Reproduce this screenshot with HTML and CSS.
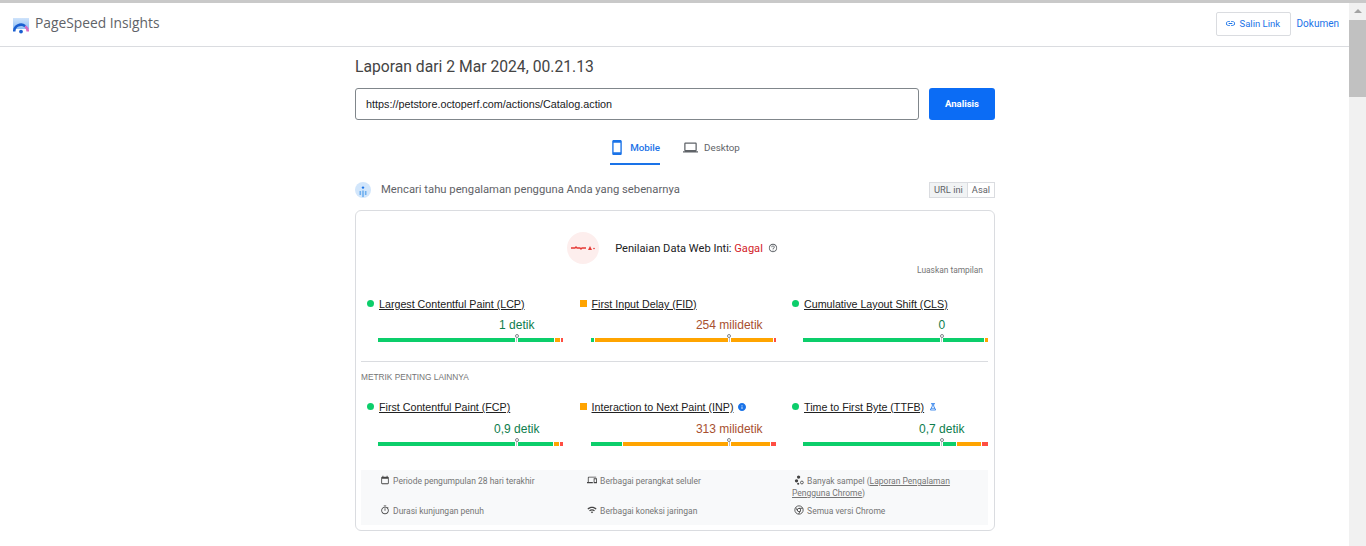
FILE: index.html
```html
<!DOCTYPE html>
<html lang="id">
<head>
    <meta charset="UTF-8">
    <meta name="viewport" content="width=device-width, initial-scale=1.0">
    <title>PageSpeed Insights</title>
    <link rel="stylesheet" href="styles.css">
</head>
<body>
    <div class="top-strip"></div>
    <div class="shell">
        <main class="page">
            <header class="topbar">
                <div class="brand">
                    <svg class="brand-logo" viewBox="0 0 16 16">
                        <defs>
                            <linearGradient id="sky" x1="0" y1="0" x2="0" y2="1">
                                <stop offset="0" stop-color="#cfe3fb"/>
                                <stop offset="1" stop-color="#8fc0f5"/>
                            </linearGradient>
                        </defs>
                        <path d="M0 0h16v11H0z" fill="url(#sky)"/>
                        <path d="M1.2 13.5a6.8 6.8 0 0 1 11-5.3" fill="none" stroke="#1a5fd0" stroke-width="2.6"/>
                        <path d="M12.2 8.2a6.8 6.8 0 0 1 2.6 5.3" fill="none" stroke="#d66bc4" stroke-width="2.6"/>
                        <circle cx="8" cy="13.6" r="1.9" fill="#1a5fd0"/>
                    </svg>
                    <span class="brand-name">PageSpeed Insights</span>
                </div>
                <div class="topbar-actions">
                    <a class="copy-link">
                        <svg class="icon-link" viewBox="0 0 24 24"><path d="M3.9 12c0-1.71 1.39-3.1 3.1-3.1h4V7H7c-2.76 0-5 2.24-5 5s2.24 5 5 5h4v-1.9H7c-1.71 0-3.1-1.39-3.1-3.1zM8 13h8v-2H8v2zm9-6h-4v1.9h4c1.71 0 3.1 1.39 3.1 3.1s-1.39 3.1-3.1 3.1h-4V17h4c2.76 0 5-2.24 5-5s-2.24-5-5-5z"/></svg>
                        Salin Link
                    </a>
                    <a class="docs-link">Dokumen</a>
                </div>
            </header>

            <div class="content">
                <h1>Laporan dari 2 Mar 2024, 00.21.13</h1>

                <form class="url-form">
                    <input class="url-input" type="text" value="https://petstore.octoperf.com/actions/Catalog.action">
                    <button class="analyze" type="button">Analisis</button>
                </form>

                <div class="tabs">
                    <div class="tab active">
                        <svg class="tab-icon" viewBox="5 1 14 22"><path d="M17 1.01L7 1c-1.1 0-2 .9-2 2v18c0 1.1.9 2 2 2h10c1.1 0 2-.9 2-2V3c0-1.1-.9-1.99-2-1.99zM17 19H7V5h10v14z"/></svg>
                        Mobile
                    </div>
                    <div class="tab">
                        <svg class="tab-icon wide" viewBox="0 4 24 16"><path d="M20 18c1.1 0 2-.9 2-2V6c0-1.1-.9-2-2-2H4c-1.1 0-2 .9-2 2v10c0 1.1.9 2 2 2H0v2h24v-2h-4zM4 6h16v10H4V6z"/></svg>
                        Desktop
                    </div>
                </div>

                <div class="crux-row">
                    <svg class="crux-icon" viewBox="0 0 16 16">
                        <circle cx="8" cy="8" r="8" fill="#d2e6fb"/>
                        <circle cx="8" cy="5.6" r="1.2" fill="#1a73e8"/>
                        <path d="M4.5 9h1.6v4H4.5zM7.2 8.4h1.6V15H7.2zM9.9 9h1.6v4H9.9z" fill="#6fb0ef"/>
                    </svg>
                    <span class="crux-text">Mencari tahu pengalaman pengguna Anda yang sebenarnya</span>
                    <div class="toggle">
                        <span class="toggle-item selected">URL ini</span>
                        <span class="toggle-item">Asal</span>
                    </div>
                </div>

                <section class="card">
                    <div class="verdict">
                        <span class="verdict-badge">
                            <svg viewBox="0 0 24 6" width="24" height="6">
                                <path d="M0 3h4l1-1 1 1h3l1 1 1-1h4" fill="none" stroke="#e53935" stroke-width="1.3"/>
                                <path d="M17 5l2-4 2 4z" fill="#e53935"/>
                                <circle cx="23" cy="3.5" r=".8" fill="#e53935"/>
                            </svg>
                        </span>
                        <span class="verdict-text">Penilaian Data Web Inti: <span class="fail">Gagal</span></span>
                        <svg class="help" viewBox="0 0 24 24"><path d="M11 18h2v-2h-2v2zm1-16C6.48 2 2 6.48 2 12s4.48 10 10 10 10-4.48 10-10S17.52 2 12 2zm0 18c-4.41 0-8-3.59-8-8s3.59-8 8-8 8 3.59 8 8-3.59 8-8 8zm0-14c-2.21 0-4 1.79-4 4h2c0-1.1.9-2 2-2s2 .9 2 2c0 2-3 1.75-3 5h2c0-2.25 3-2.5 3-5 0-2.21-1.79-4-4-4z"/></svg>
                    </div>
                    <div class="expand">Luaskan tampilan</div>

                    <div class="metrics first">
                        <div class="metric">
                            <div class="metric-title"><span class="dot"></span><a>Largest Contentful Paint (LCP)</a></div>
                            <div class="metric-value good"><span>1 detik</span></div>
                            <div class="bar">
                                <i class="seg green" style="flex-grow:176"></i><i class="seg orange" style="flex-grow:5"></i><i class="seg red" style="flex-grow:2"></i>
                                <span class="marker"></span>
                            </div>
                        </div>
                        <div class="metric">
                            <div class="metric-title"><span class="square"></span><a>First Input Delay (FID)</a></div>
                            <div class="metric-value average"><span>254 milidetik</span></div>
                            <div class="bar">
                                <i class="seg green" style="flex-grow:3"></i><i class="seg orange" style="flex-grow:177"></i><i class="seg red" style="flex-grow:1"></i>
                                <span class="marker"></span>
                            </div>
                        </div>
                        <div class="metric">
                            <div class="metric-title"><span class="dot"></span><a>Cumulative Layout Shift (CLS)</a></div>
                            <div class="metric-value good"><span>0</span></div>
                            <div class="bar">
                                <i class="seg green" style="flex-grow:181"></i><i class="seg orange" style="flex-grow:3"></i>
                                <span class="marker"></span>
                            </div>
                        </div>
                    </div>

                    <div class="divider"></div>
                    <div class="section-label">METRIK PENTING LAINNYA</div>

                    <div class="metrics second">
                        <div class="metric">
                            <div class="metric-title"><span class="dot"></span><a>First Contentful Paint (FCP)</a></div>
                            <div class="metric-value good"><span>0,9 detik</span></div>
                            <div class="bar">
                                <i class="seg green" style="flex-grow:174"></i><i class="seg orange" style="flex-grow:5"></i><i class="seg red" style="flex-grow:3"></i>
                                <span class="marker"></span>
                            </div>
                        </div>
                        <div class="metric">
                            <div class="metric-title">
                                <span class="square"></span><a>Interaction to Next Paint (INP)</a>
                                <svg class="title-icon" viewBox="2 2 20 20"><path fill="#1a73e8" d="M12 2C6.48 2 2 6.48 2 12s4.48 10 10 10 10-4.48 10-10S17.52 2 12 2zm1 15h-2v-6h2v6zm0-8h-2V7h2v2z"/></svg>
                            </div>
                            <div class="metric-value average"><span>313 milidetik</span></div>
                            <div class="bar">
                                <i class="seg green" style="flex-grow:31"></i><i class="seg orange" style="flex-grow:147"></i><i class="seg red" style="flex-grow:4"></i>
                                <span class="marker"></span>
                            </div>
                        </div>
                        <div class="metric">
                            <div class="metric-title">
                                <span class="dot"></span><a>Time to First Byte (TTFB)</a>
                                <svg class="title-icon" viewBox="0 0 12 12"><path d="M3 1h6M5 1v3.5L2 10.5h8L7 4.5V1" fill="none" stroke="#1a73e8" stroke-width="1.2"/><path d="M3 8h6" stroke="#1a73e8" stroke-width="1"/></svg>
                            </div>
                            <div class="metric-value good"><span>0,7 detik</span></div>
                            <div class="bar">
                                <i class="seg green" style="flex-grow:153"></i><i class="seg orange" style="flex-grow:24"></i><i class="seg red" style="flex-grow:6"></i>
                                <span class="marker"></span>
                            </div>
                        </div>
                    </div>

                    <div class="notes">
                        <div class="note">
                            <svg viewBox="0 0 24 24"><path d="M19 4h-1V2h-2v2H8V2H6v2H5c-1.1 0-2 .9-2 2v14c0 1.1.9 2 2 2h14c1.1 0 2-.9 2-2V6c0-1.1-.9-2-2-2zm0 16H5V9h14v11z"/></svg>
                            Periode pengumpulan 28 hari terakhir
                        </div>
                        <div class="note">
                            <svg viewBox="0 0 24 24"><path d="M4 6h18V4H4c-1.1 0-2 .9-2 2v11H0v3h14v-3H4V6zm19 2h-6c-.55 0-1 .45-1 1v10c0 .55.45 1 1 1h6c.55 0 1-.45 1-1V9c0-.55-.45-1-1-1zm-1 9h-4v-7h4v7z"/></svg>
                            Berbagai perangkat seluler
                        </div>
                        <div class="note">
                            <svg viewBox="0 0 24 24"><circle cx="11" cy="5" r="4"/><circle cx="6" cy="14" r="4"/><circle cx="10" cy="21" r="2.6"/><circle cx="19" cy="18" r="3.4" fill="none" stroke="#444" stroke-width="2"/></svg>
                            Banyak sampel (<a>Laporan Pengalaman</a> <a>Pengguna Chrome</a>)
                        </div>
                        <div class="note">
                            <svg viewBox="0 0 24 24"><path d="M15 1H9v2h6V1zm-4 13h2V8h-2v6zm8.03-6.61l1.42-1.42c-.43-.51-.9-.99-1.41-1.41l-1.42 1.42C16.07 4.74 14.12 4 12 4c-4.97 0-9 4.03-9 9s4.02 9 9 9 9-4.03 9-9c0-2.12-.74-4.07-1.97-5.61zM12 20c-3.87 0-7-3.13-7-7s3.13-7 7-7 7 3.13 7 7-3.13 7-7 7z"/></svg>
                            Durasi kunjungan penuh
                        </div>
                        <div class="note">
                            <svg viewBox="0 0 24 24"><path d="M1 9l2 2c4.97-4.97 13.03-4.97 18 0l2-2C16.93 2.93 7.08 2.93 1 9zm8 8l3 3 3-3c-1.65-1.66-4.34-1.66-6 0zm-4-4l2 2c2.76-2.76 7.24-2.76 10 0l2-2C15.14 9.14 8.87 9.14 5 13z"/></svg>
                            Berbagai koneksi jaringan
                        </div>
                        <div class="note">
                            <svg viewBox="0 0 24 24"><circle cx="12" cy="12" r="10" fill="none" stroke="#444" stroke-width="2"/><circle cx="12" cy="12" r="4" fill="none" stroke="#444" stroke-width="2"/><path d="M12 8h9M8.5 14L4 6.5M15.5 14L11 21.5" fill="none" stroke="#444" stroke-width="2"/></svg>
                            Semua versi Chrome
                        </div>
                    </div>
                </section>
            </div>
        </main>

        <div class="scrollbar">
            <span class="scroll-arrow"></span>
            <span class="scroll-thumb"></span>
        </div>
    </div>
</body>
</html>
```

FILE: styles.css
```css
html, body {
    margin: 0;
    height: 100%;
    overflow: hidden;
}
body {
    font-family: 'Roboto', 'Liberation Sans', sans-serif;
    background-color: #fff;
    color: #202124;
}
a {
    color: inherit;
}
svg {
    display: block;
}
.top-strip {
    height: 3px;
    background-color: #c9c9c9;
}
.shell {
    display: flex;
    height: 543px;
}
.page {
    flex: 1;
    min-width: 0;
}
.topbar {
    display: flex;
    justify-content: space-between;
    align-items: center;
    box-sizing: border-box;
    height: 44px;
    padding: 0 10px 0 13px;
    border-bottom: 1px solid #dadce0;
}
.brand {
    display: flex;
    align-items: center;
    gap: 6px;
    margin-top: -5px;
}
.brand-logo {
    width: 16px;
    height: 16px;
    margin-top: 7px;
}
.brand-name {
    font-family: 'Open Sans', sans-serif;
    font-size: 13.8px;
    color: #5f6368;
}
.topbar-actions {
    display: flex;
    align-items: center;
    gap: 6px;
    margin-top: -2px;
    font-size: 9.5px;
    color: #1a73e8;
}
.docs-link {
    font-size: 10px;
}
.copy-link {
    display: flex;
    align-items: center;
    gap: 4px;
    box-sizing: border-box;
    height: 24px;
    width: 75px;
    padding-left: 8px;
    border: 1px solid #dadce0;
    border-radius: 2px;
}
.icon-link {
    width: 11px;
    height: 11px;
    fill: #1a73e8;
}
.content {
    width: 640px;
    margin-left: 355px;
}
h1 {
    margin: 10px 0 0;
    font-size: 15.7px;
    font-weight: 400;
    line-height: 20px;
    color: #444;
}
.url-form {
    display: flex;
    gap: 10px;
    margin-top: 11px;
}
.url-input {
    flex: 1;
    box-sizing: border-box;
    height: 32px;
    padding: 0 10px;
    border: 1px solid #80868b;
    border-radius: 3px;
    font-family: 'Liberation Sans', sans-serif;
    font-size: 10.8px;
    color: #202124;
}
.analyze {
    width: 66px;
    height: 32px;
    padding: 0 0 2px;
    border: none;
    border-radius: 3px;
    background-color: #0b6cf5;
    color: white;
    font-family: 'Roboto', sans-serif;
    font-size: 9.5px;
    font-weight: 700;
}
.tabs {
    display: flex;
    justify-content: center;
    gap: 21px;
    margin-top: 14px;
    font-size: 9.8px;
    color: #5f6368;
}
.tab {
    display: flex;
    align-items: center;
    gap: 8px;
    box-sizing: border-box;
    height: 31px;
    padding: 0 0 3px 2px;
    border-bottom: 2px solid transparent;
}
.tab.active {
    color: #1a73e8;
    font-weight: 500;
    border-bottom-color: #1a73e8;
}
.tab-icon {
    width: 10px;
    height: 15px;
    fill: #1a73e8;
}
.tab-icon.wide {
    width: 15px;
    height: 11px;
    margin-right: -2px;
    fill: #5f6368;
}
.crux-row {
    display: flex;
    align-items: center;
    height: 16px;
    margin-top: 17px;
}
.crux-icon {
    width: 16px;
    height: 16px;
}
.crux-text {
    flex: 1;
    margin: -1px 0 0 10px;
    font-size: 11.26px;
    color: #5f6368;
}
.toggle {
    display: flex;
    border: 1px solid #dadce0;
    font-size: 9.3px;
    line-height: 14px;
    color: #5f6368;
}
.toggle-item {
    padding: 0 4px;
}
.toggle-item.selected {
    padding: 0 4px;
    background-color: #f1f3f4;
    border-right: 1px solid #dadce0;
}
.card {
    box-sizing: border-box;
    height: 321px;
    margin-top: 12px;
    padding: 0 6px 0 5px;
    border: 1px solid #dadce0;
    border-radius: 6px;
}
.verdict {
    display: flex;
    align-items: center;
    justify-content: center;
    height: 32px;
    margin-top: 21px;
    padding-right: 4px;
}
.verdict-badge {
    display: flex;
    align-items: center;
    justify-content: center;
    width: 32px;
    height: 32px;
    border-radius: 50%;
    background-color: #fdeeed;
}
.verdict-text {
    margin-left: 16px;
    font-size: 11.1px;
    color: #202124;
}
.fail {
    color: #d3232a;
}
.help {
    width: 10px;
    height: 10px;
    margin-left: 5px;
    fill: #5f6368;
}
.expand {
    margin-top: 1px;
    padding-right: 5px;
    font-size: 8.4px;
    line-height: 10px;
    text-align: right;
    color: #757575;
}
.metrics {
    display: grid;
    grid-template-columns: repeat(3, 197px);
    column-gap: 15.5px;
    padding-left: 5px;
    font-family: 'Liberation Sans', sans-serif;
}
.metrics.first {
    margin-top: 22px;
}
.metrics.second {
    margin-top: 18px;
}
.metric-title {
    display: flex;
    align-items: center;
    height: 14px;
    font-size: 10.7px;
    color: #212121;
}
.metric-title a {
    text-decoration: underline;
    white-space: nowrap;
}
.dot, .square {
    flex: none;
    width: 7px;
    height: 7px;
    margin: 0 5px 2px 1px;
}
.dot {
    border-radius: 50%;
    background-color: #0cce6b;
}
.square {
    background-color: #ffa400;
}
.title-icon {
    width: 8px;
    height: 8px;
    margin-left: 5px;
}
.metric-value {
    display: flex;
    justify-content: center;
    width: 0;
    margin: 6px 0 0 calc(12px + 138.75px);
    font-size: 12px;
    line-height: 16px;
    white-space: nowrap;
}
.second .metric-value {
    margin-top: 7px;
}
.metric-value.good {
    color: #0d7d4d;
}
.metric-value.average {
    color: #a8502f;
}
.bar {
    position: relative;
    display: flex;
    gap: 1px;
    height: 4px;
    margin: 5px 0 0 12px;
}
.seg {
    flex-basis: 0;
}
.seg.green {
    background-color: #0cce6b;
}
.seg.orange {
    background-color: #ffa400;
}
.seg.red {
    background-color: #ff4e42;
}
.marker {
    position: absolute;
    left: 75%;
    top: -1px;
    width: 3px;
    height: 6px;
    margin-left: -1.5px;
    background-color: #fff;
}
.marker::before {
    content: "";
    position: absolute;
    left: -0.5px;
    top: -3px;
    box-sizing: border-box;
    width: 4px;
    height: 4px;
    border: 1px solid #80868b;
    border-radius: 50%;
    background-color: #fff;
}
.marker::after {
    content: "";
    position: absolute;
    left: 1px;
    top: 1px;
    width: 1px;
    height: 4px;
    background-color: #bdc1c6;
}
.divider {
    height: 1px;
    margin-top: 19px;
    background-color: #dadce0;
}
.section-label {
    margin-top: 10px;
    font-family: 'Liberation Sans', sans-serif;
    font-size: 8.3px;
    line-height: 10px;
    color: #757575;
}
.notes {
    display: grid;
    grid-template-columns: 207px 207px 180px;
    align-content: start;
    row-gap: 6px;
    box-sizing: border-box;
    height: 55px;
    margin-top: 24px;
    padding: 5px 0 0 17px;
    background-color: #f8f9fa;
    font-size: 8.5px;
    line-height: 12px;
    color: #757575;
}
.note svg {
    display: inline-block;
    width: 10px;
    height: 10px;
    margin: 0 1px 0 2px;
    vertical-align: -1px;
    fill: #444;
}
.note a {
    text-decoration: underline;
}
.scrollbar {
    position: relative;
    flex: none;
    width: 17px;
    background-color: #f1f1f1;
}
.scroll-arrow {
    display: block;
    width: 0;
    margin: 6px auto 0;
    border-left: 4px solid transparent;
    border-right: 4px solid transparent;
    border-bottom: 4px solid #a3a3a3;
}
.scroll-thumb {
    display: block;
    height: 77px;
    margin-top: 7px;
    background-color: #c1c1c1;
}
```
